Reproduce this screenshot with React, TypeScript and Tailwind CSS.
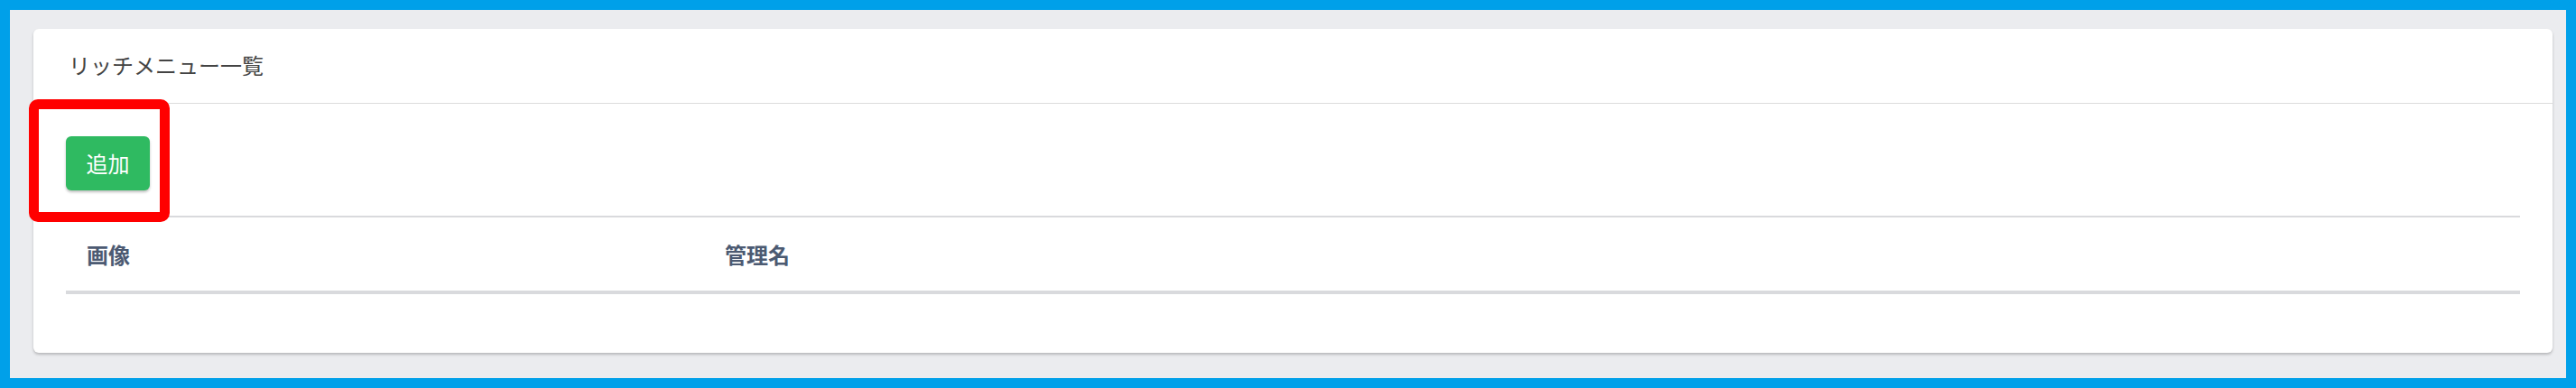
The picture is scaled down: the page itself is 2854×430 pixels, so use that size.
export default function App() {
  return (
    <div className="relative h-[430px] w-[2854px] bg-[#00a0e9] p-[11px] font-['Noto_Sans_CJK_JP',sans-serif]">
      <div className="h-full bg-[#ebecef] pt-[21px] pl-[26px] pr-[15px] pb-[28px]">
        <div className="flex h-full flex-col rounded-[6px] bg-white shadow-[0_2px_3px_rgba(0,0,0,0.22)]">
          <div className="flex h-[83px] shrink-0 items-center border-b border-[#dcdcdc] px-[39px] pb-[2px]">
            <h2 className="text-[24px] font-normal text-[#444444]">リッチメニュー一覧</h2>
          </div>
          <div className="px-[36px] pt-[36px]">
            <button className="flex h-[60px] w-[93px] items-center justify-center rounded-[6px] bg-[#2fba61] text-[24px] text-white shadow-[0_2px_3px_rgba(0,0,0,0.25)]">
              追加
            </button>
            <table className="mt-[28px] w-full border-collapse">
              <thead>
                <tr className="h-[84px] border-t-2 border-b-4 border-[#d9dadd]">
                  <th className="w-[707px] px-[23px] text-left text-[24px] font-bold text-[#4c5a72]">画像</th>
                  <th className="px-[23px] text-left text-[24px] font-bold text-[#4c5a72]">管理名</th>
                </tr>
              </thead>
            </table>
          </div>
        </div>
      </div>
      <div className="absolute left-[32px] top-[110px] h-[136px] w-[156px] rounded-[10px] border-[11px] border-[#ff0000]" />
    </div>
  );
}
